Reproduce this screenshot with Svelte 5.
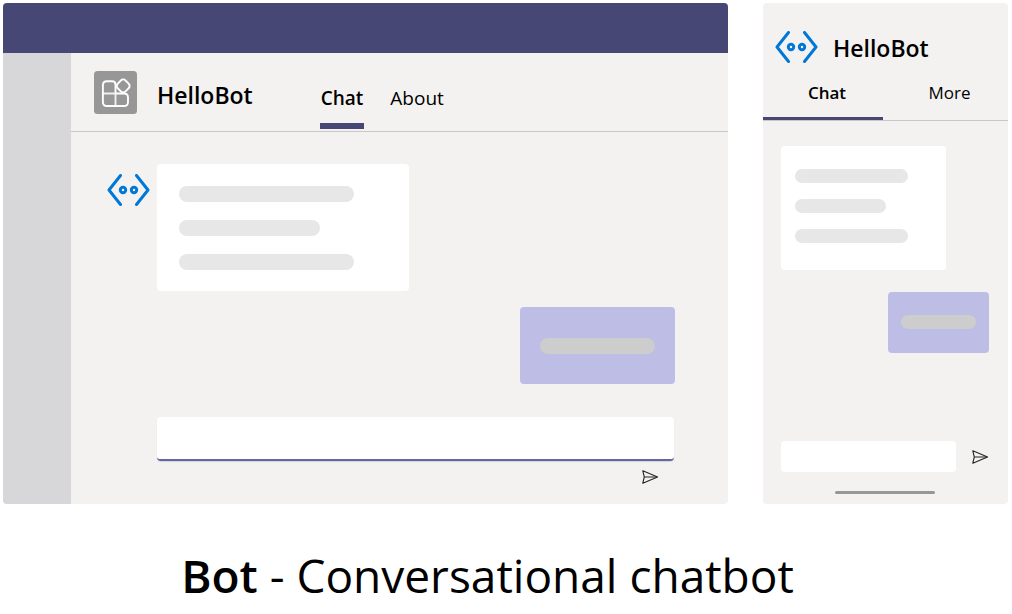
<script>
  let desktopMessage = $state('');
  let phoneMessage = $state('');
  let desktopTab = $state('Chat');
  let phoneTab = $state('Chat');
</script>

{#snippet botIcon()}
  <svg class="bot" viewBox="0 0 43 32" width="43" height="32" aria-hidden="true">
    <g fill="none" stroke="#0078d7" stroke-width="3">
      <path d="M13.5 1.5 L2 16 L13.5 30.5" stroke-linecap="round" stroke-linejoin="round" />
      <path d="M29.5 1.5 L41 16 L29.5 30.5" stroke-linecap="round" stroke-linejoin="round" />
      <circle cx="16" cy="16" r="2.7" />
      <circle cx="27" cy="16" r="2.7" />
    </g>
  </svg>
{/snippet}

{#snippet sendIcon()}
  <svg viewBox="0 0 17 14" width="17" height="14" aria-hidden="true">
    <g fill="none" stroke="#252423" stroke-width="1.1" stroke-linejoin="round">
      <path d="M0.8 0.8 L15.6 7 L0.8 13.2 L2.3 7 Z" />
      <path d="M2.3 7 H15" />
    </g>
  </svg>
{/snippet}

<main>
  <div class="devices">
    <section class="desktop" aria-label="Desktop">
      <div class="topbar"></div>
      <div class="body">
        <div class="rail"></div>
        <div class="content">
          <header>
            <svg class="app" viewBox="0 0 43 43" width="43" height="43" aria-hidden="true">
              <rect width="43" height="43" rx="3.5" fill="#979797" />
              <g fill="none" stroke="#fff" stroke-width="1.9" stroke-linejoin="round">
                <path d="M21.5 22.5 V13.7 Q21.5 10.3 18.1 10.3 H13 Q8.9 10.3 8.9 14.4 V30.9 Q8.9 35 13 35 H29.9 Q34 35 34 30.9 V26.6 Q34 22.5 29.9 22.5 H21.5" />
                <path d="M21.5 22.5 V35 M8.9 22.5 H21.5" stroke-opacity="0.85" />
                <rect x="23.7" y="9.4" width="11" height="11" rx="3.3" transform="rotate(45 29.2 14.9)" fill="#979797" />
              </g>
            </svg>
            <h2>HelloBot</h2>
            <nav class="tabs">
              {#each ['Chat', 'About'] as tab}
                <button class:active={desktopTab === tab} onclick={() => (desktopTab = tab)}>{tab}</button>
              {/each}
            </nav>
          </header>
          <div class="chat">
            <div class="incoming">
              {@render botIcon()}
              <div class="card"><i></i><i class="short"></i><i></i></div>
            </div>
            <div class="reply"><i></i></div>
            <form onsubmit={(e) => e.preventDefault()}>
              <input type="text" aria-label="Message" bind:value={desktopMessage} />
              <button class="send" aria-label="Send">{@render sendIcon()}</button>
            </form>
          </div>
        </div>
      </div>
    </section>

    <section class="phone" aria-label="Phone">
      <header>
        {@render botIcon()}
        <h2>HelloBot</h2>
      </header>
      <nav class="tabs">
        {#each ['Chat', 'More'] as tab}
          <button class:active={phoneTab === tab} onclick={() => (phoneTab = tab)}>{tab}</button>
        {/each}
      </nav>
      <div class="chat">
        <div class="card"><i></i><i class="short"></i><i></i></div>
        <div class="reply"><i></i></div>
        <form onsubmit={(e) => e.preventDefault()}>
          <input type="text" aria-label="Message" bind:value={phoneMessage} />
          <button class="send" aria-label="Send">{@render sendIcon()}</button>
        </form>
        <div class="home"></div>
      </div>
    </section>
  </div>
  <h1><strong>Bot</strong> - Conversational chatbot</h1>
</main>

<style>
  :global(body) {
    margin: 0;
    background: #fff;
  }
  main {
    box-sizing: border-box;
    padding: 3px 4px 0 3px;
    font-family: 'Segoe UI', 'Open Sans', 'Noto Sans', sans-serif;
    color: #000;
  }
  .devices {
    display: grid;
    grid-template-columns: 725fr 245fr;
    gap: 35px;
  }
  section {
    display: flex;
    flex-direction: column;
    min-width: 0;
    background: #f3f2f1;
    border-radius: 4px;
    overflow: hidden;
  }
  svg {
    display: block;
    flex: none;
  }
  h1,
  h2 {
    margin: 0;
  }
  h2 {
    font-size: 23px;
    line-height: 32px;
    font-weight: 600;
  }
  button {
    margin: 0;
    padding: 0;
    border: 0;
    background: none;
    font-family: inherit;
    color: inherit;
    cursor: pointer;
  }
  input {
    box-sizing: border-box;
    min-width: 0;
    padding: 0 12px;
    border: 0;
    border-radius: 4px;
    background: #fff;
    font: inherit;
    outline: none;
  }
  i {
    display: block;
    border-radius: 8px;
    background: #e7e7e7;
  }
  .card,
  .reply {
    box-sizing: border-box;
    border-radius: 4px;
  }
  .card {
    display: flex;
    flex-direction: column;
    background: #fff;
  }
  .reply {
    align-self: flex-end;
    background: #bdbde6;
  }
  .reply i {
    background: #cdcdcd;
  }
  .chat {
    display: flex;
    flex-direction: column;
  }

  .topbar {
    height: 50px;
    background: #464775;
  }
  .body {
    display: flex;
  }
  .rail {
    width: 68px;
    flex: none;
    background: #d7d7d9;
  }
  .content {
    flex: 1;
    min-width: 0;
  }
  .desktop header {
    display: flex;
    align-items: center;
    height: 78px;
    padding-left: 23px;
    border-bottom: 1px solid #c8c8c8;
  }
  .desktop h2 {
    margin: 6px 67px 0 20px;
  }
  .desktop .tabs {
    display: flex;
    gap: 25px;
    align-self: flex-end;
    margin-bottom: 2px;
  }
  .desktop .tabs button {
    padding: 0 1px 11px;
    border-bottom: 6px solid transparent;
    font-size: 19px;
    line-height: 28px;
  }
  .tabs button.active {
    font-weight: 600;
  }
  .desktop .tabs button.active,
  .phone .tabs button.active {
    border-bottom-color: #464775;
  }
  .desktop .chat {
    padding: 32px 53px 20px 36px;
  }
  .incoming {
    display: flex;
    gap: 7px;
  }
  .incoming .bot {
    margin-top: 10px;
  }
  .desktop .card {
    width: 252px;
    gap: 18px;
    padding: 22px 22px 21px;
  }
  .desktop i {
    width: 175px;
    height: 16px;
  }
  .desktop .short {
    width: 141px;
  }
  .desktop .reply {
    margin-top: 16px;
    padding: 31px 20px 30px;
  }
  .desktop .reply i {
    width: 115px;
  }
  .desktop form {
    display: flex;
    flex-direction: column;
    margin: 33px 1px 0 50px;
  }
  .desktop input {
    height: 44px;
    border-bottom: 2px solid #6264a7;
    box-shadow: 0 1px 1px rgba(0, 0, 0, 0.12);
  }
  .desktop .send {
    align-self: flex-end;
    margin: 9px 15px 0 0;
  }

  .phone header {
    display: flex;
    align-items: center;
    gap: 15px;
    padding: 27px 12px 0;
  }
  .phone h2 {
    margin-top: 2px;
  }
  .phone .tabs {
    display: grid;
    grid-template-columns: 120fr 125fr;
    border-bottom: 1px solid #c8c8c8;
  }
  .phone .tabs button {
    padding: 15px 0 10px 8px;
    border-bottom: 3px solid transparent;
    font-size: 17px;
    line-height: 28px;
  }
  .phone .chat {
    padding: 25px 19px 0 18px;
  }
  .phone .card {
    width: 165px;
    gap: 16px;
    padding: 23px 14px 27px;
  }
  .phone i {
    width: 113px;
    height: 14px;
  }
  .phone .short {
    width: 91px;
  }
  .phone .reply {
    margin-top: 22px;
    padding: 23px 13px 24px;
  }
  .phone .reply i {
    width: 75px;
  }
  .phone form {
    display: flex;
    align-items: center;
    gap: 16px;
    margin-top: 88px;
  }
  .phone input {
    flex: 1;
    height: 31px;
  }
  .home {
    width: 100px;
    height: 3px;
    margin: 19px auto 0;
    border-radius: 2px;
    background: #979797;
  }
  h1 {
    padding: 36px 36px 0 0;
    font-size: 46px;
    line-height: 70px;
    font-weight: 400;
    text-align: center;
  }
  h1 strong {
    font-weight: 600;
  }
</style>
